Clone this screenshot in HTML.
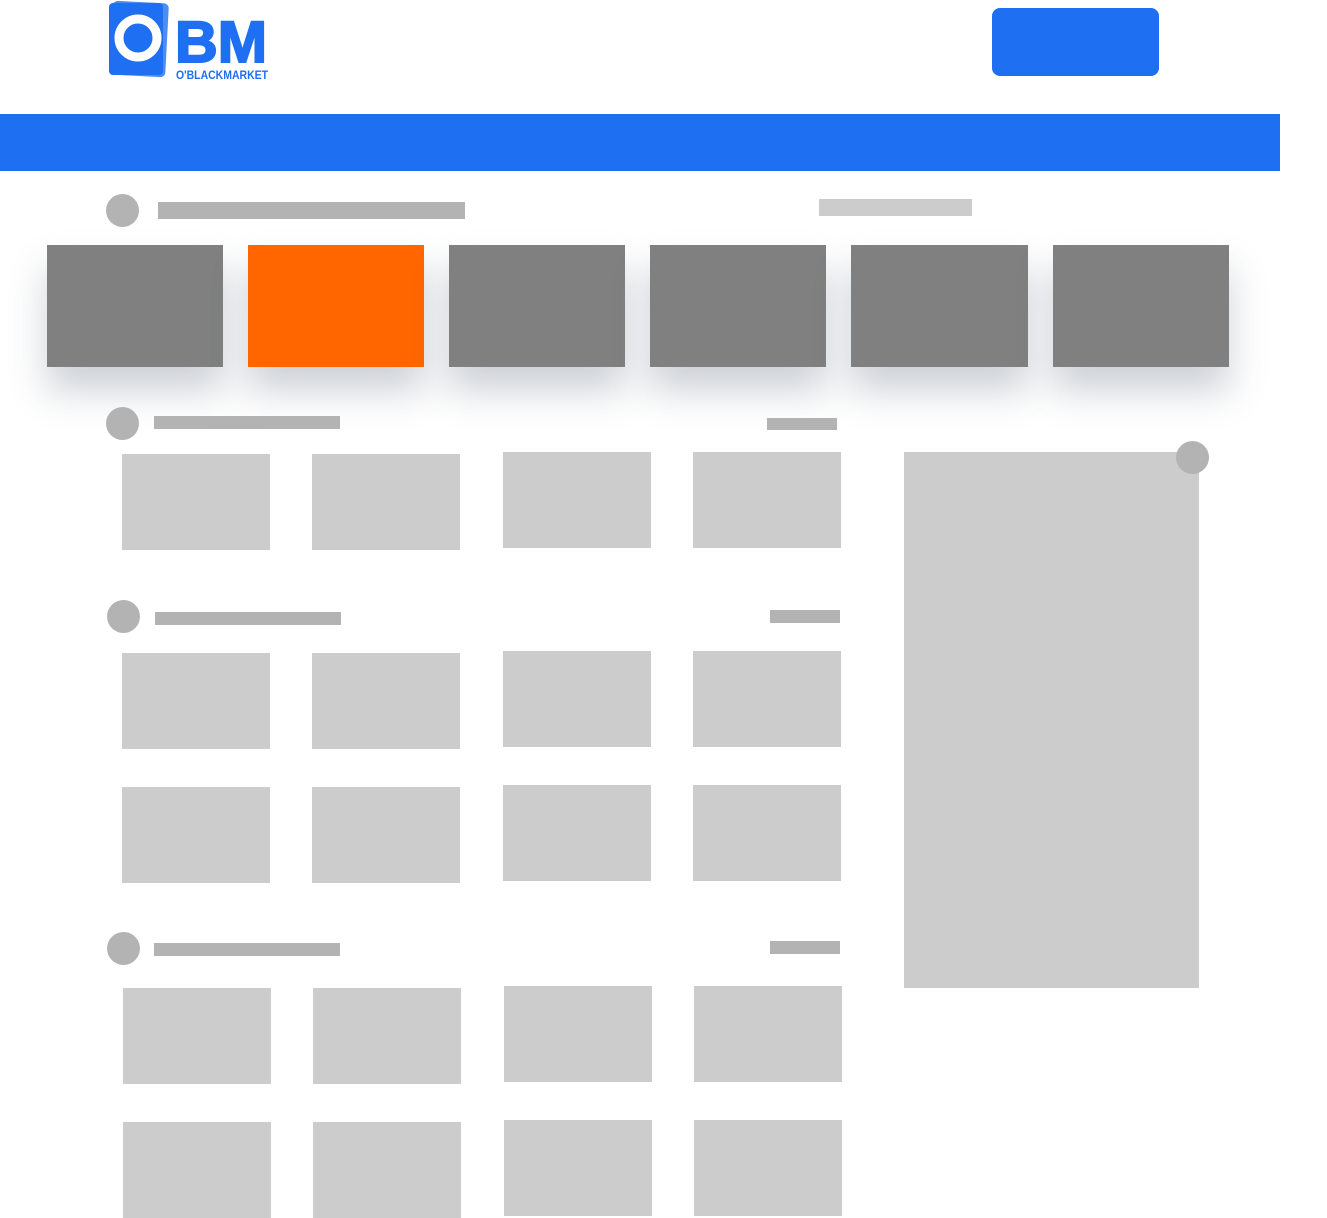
<!DOCTYPE html>
<html><head><style>
body{margin:0;width:1327px;height:1218px;background:#fff;position:relative;overflow:hidden;font-family:"Liberation Sans",sans-serif}
div{position:absolute}
.c{border-radius:50%;background:#b3b3b3;width:33px;height:33px}
.b{background:#b3b3b3}
.g{background:#cccccc;width:148px;height:96px}
.k{background:#808080;width:176px;height:122px;top:245px;box-shadow:0 24px 34px rgba(60,75,95,.25)}
</style></head><body>
<svg style="position:absolute;left:106px;top:0" width="170" height="82">
<rect x="5" y="2" width="56" height="74" rx="5" fill="#4d8cf5" transform="rotate(3 33 40)"/>
<rect x="3" y="3" width="54" height="72" rx="4" fill="#1e6ff1"/>
<circle cx="32" cy="38" r="19" fill="none" stroke="#fff" stroke-width="9"/>
<text x="69" y="62" font-family="Liberation Sans" font-weight="bold" font-size="58" fill="#1e6ff1" stroke="#1e6ff1" stroke-width="2" textLength="92" lengthAdjust="spacingAndGlyphs">BM</text>
<text x="70" y="79" font-family="Liberation Sans" font-weight="bold" font-size="12" fill="#1e6ff1" textLength="92" lengthAdjust="spacingAndGlyphs">O'BLACKMARKET</text>
</svg>
<div style="left:992px;top:8px;width:167px;height:68px;border-radius:8px;background:#1e6ff1"></div>
<div style="left:0;top:114px;width:1280px;height:57px;background:#1e6ff1"></div>

<div class="c" style="left:106px;top:194px"></div>
<div class="b" style="left:158px;top:202px;width:307px;height:17px"></div>
<div style="left:819px;top:199px;width:153px;height:17px;background:#ccc"></div>

<div class="k" style="left:47px"></div>
<div class="k" style="left:248px;background:#ff6600"></div>
<div class="k" style="left:449px"></div>
<div class="k" style="left:650px"></div>
<div class="k" style="left:851px;width:177px"></div>
<div class="k" style="left:1053px"></div>

<div class="c" style="left:106px;top:407px"></div>
<div class="b" style="left:154px;top:416px;width:186px;height:13px"></div>
<div class="b" style="left:767px;top:418px;width:70px;height:12px"></div>
<div class="g" style="left:122px;top:454px"></div><div class="g" style="left:312px;top:454px"></div>
<div class="g" style="left:503px;top:452px"></div><div class="g" style="left:693px;top:452px"></div>

<div class="c" style="left:107px;top:600px"></div>
<div class="b" style="left:155px;top:612px;width:186px;height:13px"></div>
<div class="b" style="left:770px;top:610px;width:70px;height:13px"></div>
<div class="g" style="left:122px;top:653px"></div><div class="g" style="left:312px;top:653px"></div>
<div class="g" style="left:503px;top:651px"></div><div class="g" style="left:693px;top:651px"></div>
<div class="g" style="left:122px;top:787px"></div><div class="g" style="left:312px;top:787px"></div>
<div class="g" style="left:503px;top:785px"></div><div class="g" style="left:693px;top:785px"></div>

<div class="c" style="left:107px;top:932px"></div>
<div class="b" style="left:154px;top:943px;width:186px;height:13px"></div>
<div class="b" style="left:770px;top:941px;width:70px;height:13px"></div>
<div class="g" style="left:123px;top:988px"></div><div class="g" style="left:313px;top:988px"></div>
<div class="g" style="left:504px;top:986px"></div><div class="g" style="left:694px;top:986px"></div>
<div class="g" style="left:123px;top:1122px"></div><div class="g" style="left:313px;top:1122px"></div>
<div class="g" style="left:504px;top:1120px"></div><div class="g" style="left:694px;top:1120px"></div>

<div style="left:904px;top:452px;width:295px;height:536px;background:#ccc"></div>
<div class="c" style="left:1176px;top:441px"></div>
</body></html>
